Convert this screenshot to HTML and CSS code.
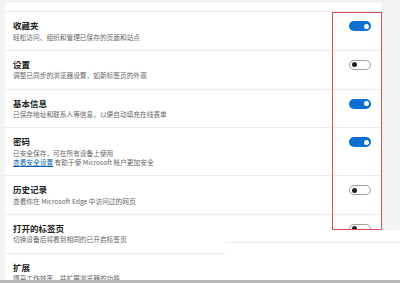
FILE: index.html
```html
<!DOCTYPE html>
<html lang="zh-CN">
<head>
<meta charset="utf-8">
<link rel="stylesheet" href="styles.css">
</head>
<body>
<div class="panel">
  <div class="list">
    <div class="row">
      <div class="text">
        <div class="title">收藏夹</div>
        <div class="desc">轻松访问、组织和管理已保存的页面和站点</div>
      </div>
      <span class="toggle on"></span>
    </div>
    <div class="row">
      <div class="text">
        <div class="title">设置</div>
        <div class="desc">调整已同步的浏览器设置，如新标签页的外观</div>
      </div>
      <span class="toggle off"></span>
    </div>
    <div class="row">
      <div class="text">
        <div class="title">基本信息</div>
        <div class="desc">已保存地址和联系人等信息，以便自动填充在线表单</div>
      </div>
      <span class="toggle on"></span>
    </div>
    <div class="row">
      <div class="text">
        <div class="title">密码</div>
        <div class="desc">已安全保存，可在所有设备上使用</div>
        <div class="desc"><a class="link" href="#">查看安全设置</a> 有助于使 Microsoft 帐户更加安全</div>
      </div>
      <span class="toggle on"></span>
    </div>
    <div class="row">
      <div class="text">
        <div class="title">历史记录</div>
        <div class="desc">查看你在 Microsoft Edge 中访问过的网页</div>
      </div>
      <span class="toggle off"></span>
    </div>
    <div class="row">
      <div class="text">
        <div class="title">打开的标签页</div>
        <div class="desc">切换设备后将看到相同的已开启标签页</div>
      </div>
      <span class="toggle off"></span>
    </div>
    <div class="row">
      <div class="text">
        <div class="title">扩展</div>
        <div class="desc">提高工作效率，并扩展浏览器的功能</div>
      </div>
      <span class="toggle off"></span>
    </div>
  </div>
</div>
<div class="highlight"></div>
<div class="cover"></div>
<div class="bottombar"></div>
</body>
</html>
```

FILE: styles.css
```css
html, body {
  margin: 0;
  padding: 0;
}
body {
  width: 400px;
  height: 283px;
  overflow: hidden;
  background: #f3f3f3;
  font-family: "Noto Sans CJK SC", "Noto Sans", sans-serif;
  position: relative;
}
.panel {
  margin: 3px 0 0 5px;
  width: 376px;
  height: 280px;
  background: #ffffff;
  padding-top: 8px;
  box-sizing: border-box;
}
.list {
  border-top: 1px solid #ececec;
}
.row {
  display: flex;
  justify-content: space-between;
  align-items: flex-start;
  padding: 8px 10px 8.3px 8px;
  border-bottom: 1px solid #ececec;
}
.title {
  font-size: 8.5px;
  line-height: 10px;
  font-weight: 700;
  color: #222222;
}
.desc {
  font-size: 6.7px;
  line-height: 9px;
  color: #666666;
  white-space: nowrap;
}
.title + .desc {
  margin-top: 2.5px;
}
.link {
  color: #0a63b8;
  text-decoration: underline;
}
.toggle {
  position: relative;
  width: 22px;
  height: 10px;
  border-radius: 5px;
  box-sizing: border-box;
  margin-top: 1px;
  flex: none;
}
.toggle::after {
  content: "";
  position: absolute;
  top: 2.5px;
  width: 5px;
  height: 5px;
  border-radius: 50%;
}
.toggle.on {
  background: #0a6fd1;
}
.toggle.on::after {
  right: 2.5px;
  background: #ffffff;
}
.toggle.off {
  background: #ffffff;
  border: 1px solid #a0a0a0;
}
.toggle.off::after {
  top: 1.5px;
  left: 2px;
  background: #222222;
}
.highlight {
  position: absolute;
  left: 332px;
  top: 12px;
  width: 50px;
  height: 218px;
  box-sizing: border-box;
  border: 1.5px solid #d9525a;
}
.cover {
  position: absolute;
  left: 225px;
  top: 230px;
  right: 0;
  bottom: 0;
  background: #ffffff;
}
.cover::before {
  content: "";
  position: absolute;
  left: 0;
  right: 0;
  top: 12px;
  height: 1px;
  background: #ececec;
}
.bottombar {
  position: absolute;
  left: 0;
  right: 0;
  top: 280px;
  height: 3px;
  background: #b9b9b9;
}
```
